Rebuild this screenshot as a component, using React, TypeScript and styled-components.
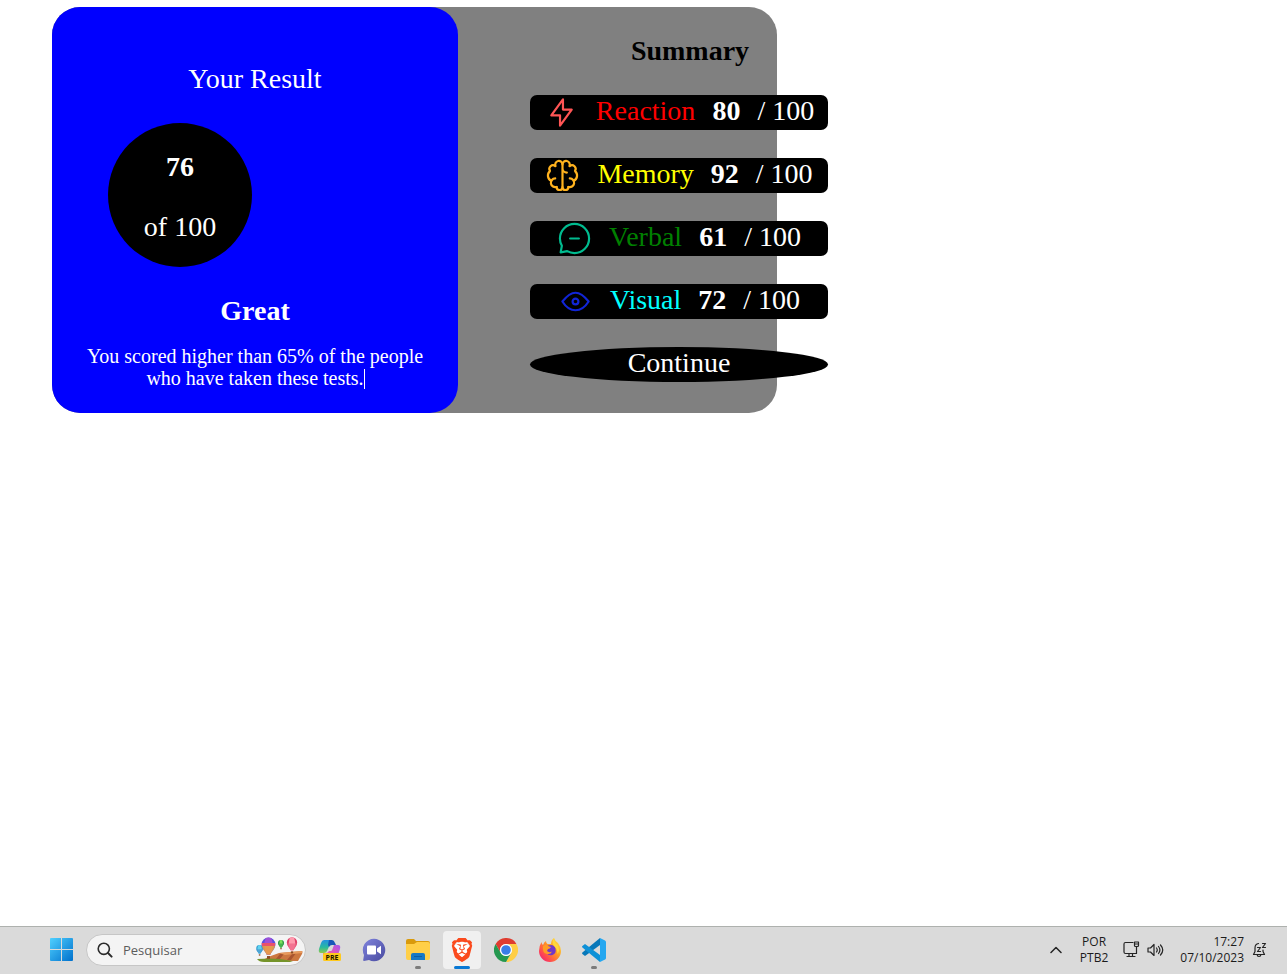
import React from "react";
import styled, { createGlobalStyle } from "styled-components";
import { SiBrave } from "react-icons/si";

const GlobalStyle = createGlobalStyle`
  * { box-sizing: border-box; }
  body { margin: 0; background: #fff; font-family: "Liberation Serif", "Times New Roman", serif; }
  h1, h2, p, ul { margin: 0; padding: 0; }
  button { font: inherit; color: inherit; border: 0; padding: 0; background: none; cursor: pointer; }
`;

const Screen = styled.div`
  display: flex;
  flex-direction: column;
  min-height: 100vh;
`;

const Page = styled.main`
  flex: 1;
  padding: 7px 52px;
  font-size: 28px;
  line-height: 32px;
`;

const Card = styled.div`
  display: flex;
  max-width: 725px;
  background: gray;
  border-radius: 28px;
`;

const Result = styled.section`
  display: flex;
  flex-direction: column;
  flex: 0 0 406px;
  padding: 56px 28px 23px;
  background: blue;
  border-radius: 28px;
  color: #fff;
  text-align: center;
`;

const ResultTitle = styled.h1`
  font-size: 28px;
  font-weight: 400;
`;

const Score = styled.div`
  display: flex;
  flex-direction: column;
  gap: 28px;
  width: 144px;
  height: 144px;
  margin: 28px;
  padding-top: 28px;
  background: #000;
  border-radius: 50%;
`;

const Grade = styled.h2`
  font-size: 28px;
`;

const Description = styled.p`
  margin-top: 18px;
  font-size: 20px;
  line-height: 22px;
`;

const Caret = styled.span`
  display: inline-block;
  width: 1px;
  height: 20px;
  margin-right: -1px;
  background: #fff;
  vertical-align: -4px;
`;

const Summary = styled.section`
  flex: 1;
  min-width: 0;
  padding: 28px 0 31px 72px;
`;

const SummaryContent = styled.div`
  display: flex;
  flex-direction: column;
  gap: 28px;
  width: 298px;
`;

const SummaryTitle = styled.h2`
  padding-left: 22px;
  font-size: 28px;
  text-align: center;
`;

const Scores = styled.ul`
  display: flex;
  flex-direction: column;
  gap: 28px;
  list-style: none;
`;

const ScoreRow = styled.li<{ $color: string }>`
  display: flex;
  justify-content: center;
  gap: 17px;
  height: 35px;
  background: #000;
  border-radius: 7px;
  color: #fff;
  white-space: nowrap;

  svg { width: 35px; height: 35px; }
  span:first-of-type { color: ${(p) => p.$color}; }
`;

const Continue = styled.button`
  height: 35px;
  padding-bottom: 3px;
  background: #000;
  border-radius: 50%;
  color: #fff;
`;

const Taskbar = styled.footer`
  display: flex;
  align-items: center;
  height: 48px;
  padding: 0 20px 2px 50px;
  background: #dadada;
  border-top: 1px solid #aeb1ae;
  color: #1b1b1b;
  font-family: "Open Sans", "Noto Sans", sans-serif;
  font-size: 12px;
  line-height: 16px;
`;

const StartButton = styled.button`
  width: 23px;
  height: 23px;
  margin-right: 13px;
  svg { display: block; }
`;

const Search = styled.label`
  display: flex;
  align-items: center;
  width: 220px;
  height: 32px;
  padding: 0 2px 0 10px;
  background: #f4f4f4;
  border: 1px solid #c6c6c6;
  border-radius: 16px;
`;

const SearchInput = styled.input`
  flex: 1;
  min-width: 0;
  margin-left: 10px;
  padding: 0;
  border: 0;
  background: none;
  outline: none;
  font: 13px/18px "Open Sans", "Noto Sans", sans-serif;
  color: #5c5c5c;
  &::placeholder { color: #5c5c5c; opacity: 1; }
`;

const Apps = styled.nav`
  display: flex;
  gap: 6px;
  margin-left: 5px;
`;

const AppButton = styled.button<{ $state?: "open" | "active" }>`
  position: relative;
  display: flex;
  align-items: center;
  justify-content: center;
  width: 38px;
  height: 38px;
  border-radius: 4px;
  background: ${(p) => (p.$state === "active" ? "#f0f0f0" : "none")};

  &::after {
    content: "";
    display: ${(p) => (p.$state ? "block" : "none")};
    position: absolute;
    bottom: 0;
    left: 50%;
    width: ${(p) => (p.$state === "active" ? 16 : 6)}px;
    height: 3px;
    border-radius: 2px;
    transform: translateX(-50%);
    background: ${(p) => (p.$state === "active" ? "#0878d4" : "#7c7c7c")};
  }
`;

const BraveMark = styled.span`
  display: flex;
  color: #fb4a1d;
  background: radial-gradient(circle at center, #fff 0 8px, transparent 8px);
`;

const Tray = styled.div`
  display: flex;
  align-items: center;
  margin-left: auto;
`;

const TrayButton = styled.button<{ $gap: number }>`
  margin-left: ${(p) => p.$gap}px;
  svg { display: block; }
`;

const TrayText = styled.div<{ $gap: number; $align: "center" | "right" }>`
  margin-left: ${(p) => p.$gap}px;
  text-align: ${(p) => p.$align};
`;

const LineIcon = ({ color, paths }: { color: string; paths: string[] }) => (
  <svg viewBox="0 0 20 20" fill="none" stroke={color} strokeWidth="1.25" strokeLinecap="round" strokeLinejoin="round" aria-hidden="true">
    {paths.map((d) => <path key={d} d={d} />)}
  </svg>
);

const categories = [
  {
    name: "Reaction", score: 80, color: "red", stroke: "#ff5555",
    paths: ["M10.833 8.333V2.5l-6.666 9.167h5V17.5l6.666-9.167h-5Z"],
  },
  {
    name: "Memory", score: 92, color: "yellow", stroke: "#ffb21e",
    paths: [
      "M5.833 11.667a2.5 2.5 0 1 0 .834 4.858",
      "M3.553 13.004a3.333 3.333 0 0 1-.728-5.53m.025-.067a2.083 2.083 0 0 1 2.983-2.824m.199.054A2.083 2.083 0 1 1 10 3.75v12.917a1.667 1.667 0 0 1-3.333 0M10 5.833a2.5 2.5 0 0 0 2.5 2.5m1.667 3.334a2.5 2.5 0 1 1-.834 4.858",
      "M16.447 13.004a3.334 3.334 0 0 0 .728-5.53m-.025-.067a2.083 2.083 0 0 0-2.983-2.824M10 3.75a2.085 2.085 0 0 1 2.538-2.033 2.084 2.084 0 0 1 1.43 2.92m-.635 12.03a1.667 1.667 0 0 1-3.333 0",
    ],
  },
  {
    name: "Verbal", score: 61, color: "green", stroke: "#00bb8f",
    paths: ["M7.5 10h5M10 18.333A8.333 8.333 0 1 0 1.667 10c0 1.518.406 2.942 1.115 4.167l-.699 3.75 3.75-.699A8.295 8.295 0 0 0 10 18.333Z"],
  },
  {
    name: "Visual", score: 72, color: "cyan", stroke: "#1125d6",
    paths: [
      "M10 11.667a1.667 1.667 0 1 0 0-3.334 1.667 1.667 0 0 0 0 3.334Z",
      "M17.5 10c-1.574 2.492-4.402 5-7.5 5s-5.926-2.508-7.5-5C4.416 7.632 6.66 5 10 5s5.584 2.632 7.5 5Z",
    ],
  },
];

const WindowsLogo = () => (
  <svg width="23" height="23" viewBox="0 0 23 23" aria-hidden="true">
    <defs>
      <linearGradient id="win" x1="0" y1="0" x2="23" y2="23" gradientUnits="userSpaceOnUse">
        <stop offset="0" stopColor="#4fd0ff" />
        <stop offset="1" stopColor="#0070cc" />
      </linearGradient>
    </defs>
    <path fill="url(#win)" d="M1 0h10v11H0V1q0-1 1-1ZM12 0h10q1 0 1 1v10H12ZM0 12h11v11H1q-1 0-1-1ZM12 12h11v10q0 1-1 1H12Z" />
  </svg>
);

const SearchGlyph = () => (
  <svg width="16" height="16" viewBox="0 0 16 16" fill="none" stroke="#2b2b2b" strokeLinecap="round" aria-hidden="true">
    <circle cx="6.8" cy="6.8" r="5.6" strokeWidth="1.6" />
    <path d="m11 11 3.6 3.6" strokeWidth="2" />
  </svg>
);

const Balloon = ({ x, y, r, colors }: { x: number; y: number; r: number; colors: [string, string, string] }) => (
  <g transform={`translate(${x} ${y}) scale(${r})`}>
    <path fill={colors[0]} d="M-1 0a1 1 0 0 1 2 0c0 .6-.5 1-.75 1.5h-.5C-.5 1-1 .6-1 0Z" />
    <path fill={colors[1]} d="M-.4-.9Q-.9.3-.25 1.5h.5Q.9.3.4-.9 0-1.1-.4-.9Z" />
    <path fill={colors[2]} d="M-.95.2h1.9C.9.7.5 1 .25 1.5h-.5C-.5 1-.9.7-.95.2Z" opacity=".75" />
    <path fill="#8c4c25" d="M-.22 1.7h.44v.4h-.44z" />
  </g>
);

const Balloons = () => (
  <svg width="47" height="26" viewBox="0 0 47 26" aria-hidden="true">
    <path fill="#cc7740" d="m12 20 11-4 23-2q1 0 0 3l-4 7H6Z" />
    <path fill="#a95530" d="m25 16 3 1-5 6h-4l5-6ZM37 15l3 1-5 7h-4l5-6Z" />
    <path fill="#e79a5d" d="m23 16 23-2v2l-17 2Z" />
    <path fill="#75942a" d="M1 22q13-1 23 0l13 2-3 1H8q-5 0-7-3Z" />
    <Balloon x={3.6} y={11.5} r={3.4} colors={["#359fd0", "#61d2ef", "#4696cc"]} />
    <Balloon x={12.5} y={7.3} r={6.9} colors={["#574fe0", "#9f50d6", "#ffb222"]} />
    <path fill="#e8526b" d="M5.700 6h13.600l-.3 3H6Z" />
    <Balloon x={25} y={6} r={3} colors={["#258f3c", "#7ae15c", "#35a34c"]} />
    <Balloon x={36} y={5.500} r={5.200} colors={["#df426b", "#ff9bae", "#ed6687"]} />
  </svg>
);

const CopilotIcon = () => (
  <svg width="24" height="24" viewBox="0 0 24 24" aria-hidden="true">
    <defs>
      <linearGradient id="copA" x1="0" y1="0" x2="0" y2="1">
        <stop offset="0" stopColor="#2490e2" /><stop offset=".55" stopColor="#28b9a0" /><stop offset="1" stopColor="#8fca4c" />
      </linearGradient>
      <linearGradient id="copB" x1="1" y1="0" x2="0" y2="1">
        <stop offset="0" stopColor="#a954ed" /><stop offset=".55" stopColor="#e458b5" /><stop offset="1" stopColor="#ff7d58" />
      </linearGradient>
    </defs>
    <path fill="url(#copA)" d="M6 2h8L9 13q-1 2-3 2H3q-3 0-2-4l2-6q1-3 3-3Z" />
    <path fill="#1a56b8" d="M11 2h3q2 0 3 3l1 2h-4q-2 0-3 2l-1-2Z" />
    <path fill="url(#copB)" d="M16 7h4q3 0 2 4l-2 6q-1 3-4 3H8q-3 0-3-5h3q2 0 3-2h2q1 0 1.500-2Z" />
    <rect x="5" y="15" width="18" height="8" rx="1.5" fill="#ffc91c" />
    <text x="14" y="21.6" fontSize="7" fontWeight="700" fontFamily="Open Sans, sans-serif" textAnchor="middle" fill="#1c1500">PRE</text>
  </svg>
);

const ChatIcon = () => (
  <svg width="24" height="24" viewBox="0 0 24 24" aria-hidden="true">
    <defs>
      <linearGradient id="chat" x1="0" y1="0" x2="1" y2="1">
        <stop offset="0" stopColor="#8084dd" /><stop offset="1" stopColor="#484a9f" />
      </linearGradient>
    </defs>
    <path fill="url(#chat)" d="M12 .8A11.2 11.2 0 1 1 7 22l-5 1q-1 0-.8-1l.8-5A11.2 11.2 0 0 1 12 .8Z" />
    <rect x="5" y="7.5" width="9" height="9" rx="1" fill="#fff" />
    <path d="m15 10.5 4-2.8v8.6l-4-2.8Z" fill="#fff" />
  </svg>
);

const FolderIcon = () => (
  <svg width="24" height="24" viewBox="0 0 24 24" aria-hidden="true">
    <path fill="#d99a0c" d="M0 3q0-2 2-2h6l2 2h12q2 0 2 2v3H0Z" />
    <path fill="#ffcf48" d="M0 6h8l3-2h11q2 0 2 2v14q0 2-2 2H2q-2 0-2-2Z" />
    <path fill="#1779c5" d="M5 22v-5q0-2 2-2h10q2 0 2 2v5Z" />
    <path fill="#0b5da5" d="M8 18h8v1H8z" />
  </svg>
);

const ChromeIcon = () => (
  <svg width="24" height="24" viewBox="0 0 24 24" aria-hidden="true">
    <path fill="#df3c30" d="M1.6 6A12 12 0 0 1 22.4 6H12a6 6 0 0 0-5.2 9Z" />
    <path fill="#ffce45" d="M22.4 6A12 12 0 0 1 12 24l5.2-9A6 6 0 0 0 12 6Z" />
    <path fill="#25984f" d="M1.6 6A12 12 0 0 0 12 24l5.2-9a6 6 0 0 1-10.4 0Z" />
    <circle cx="12" cy="12" r="6" fill="#fff" />
    <circle cx="12" cy="12" r="4.8" fill="#397de7" />
  </svg>
);

const FirefoxIcon = () => (
  <svg width="24" height="24" viewBox="0 0 24 24" aria-hidden="true">
    <defs>
      <linearGradient id="fox" x1="1" y1="0" x2="0" y2="1">
        <stop offset="0" stopColor="#fff44f" /><stop offset=".4" stopColor="#ffa022" /><stop offset=".75" stopColor="#ff4452" /><stop offset="1" stopColor="#e31587" />
      </linearGradient>
    </defs>
    <path fill="url(#fox)" d="M3.500 4q0 2 1.500 3 1-3 3-4 0 2 1.500 3H13q0-4 3-6 1 3 4 5 3 4 3 8a11 11 0 0 1-22 0q0-5 2.500-9Z" />
    <path fill="#7139c9" d="M10 7.500q6-2 7.500 3 1 5-3 6.500-4 1-6-2-1-4 1.500-7.500Z" />
    <path fill="#ff9c25" d="M5 8q3-2 5 0l3 1q-1 2-3 2l-1 2q2 2 5 .5-1 3-5 2.500-5-1-4-8Z" />
    <path fill="#ffd83c" d="M16 0q0 4 3.500 7 3 5 0 9 0-5-2.500-7-4-3-1-9Z" />
  </svg>
);

const CodeIcon = () => (
  <svg width="24" height="24" viewBox="0 0 24 24" aria-hidden="true">
    <path fill="#0878b9" d="M18 0v7L3 18 .4 16q-.7-.6 0-1.4Z" />
    <path fill="#0e91d7" d="M.4 8.1 3 6l15 11v7L.4 9.4q-.7-.7 0-1.3Z" />
    <path fill="#25a7f0" d="m18 0 5 2.4q1 .5 1 1.6v16q0 1.1-1 1.6L18 24Z" />
  </svg>
);

const trayStroke = { fill: "none", stroke: "#242424", strokeWidth: 1.2, strokeLinecap: "round", strokeLinejoin: "round" } as const;

export default function App() {
  return (
    <Screen>
      <GlobalStyle />
      <Page>
        <Card>
          <Result>
            <ResultTitle>Your Result</ResultTitle>
            <Score>
              <strong>76</strong>
              <span>of 100</span>
            </Score>
            <Grade>Great</Grade>
            <Description>
              You scored higher than 65% of the people who have taken these tests.<Caret />
            </Description>
          </Result>
          <Summary>
            <SummaryContent>
              <SummaryTitle>Summary</SummaryTitle>
              <Scores>
                {categories.map((c) => (
                  <ScoreRow key={c.name} $color={c.color}>
                    <LineIcon color={c.stroke} paths={c.paths} />
                    <span>{c.name}</span>
                    <strong>{c.score}</strong>
                    <span>/ 100</span>
                  </ScoreRow>
                ))}
              </Scores>
              <Continue type="button">Continue</Continue>
            </SummaryContent>
          </Summary>
        </Card>
      </Page>

      <Taskbar>
        <StartButton type="button" aria-label="Iniciar"><WindowsLogo /></StartButton>
        <Search>
          <SearchGlyph />
          <SearchInput type="text" placeholder="Pesquisar" aria-label="Pesquisar" />
          <Balloons />
        </Search>
        <Apps>
          <AppButton type="button" aria-label="Copilot"><CopilotIcon /></AppButton>
          <AppButton type="button" aria-label="Chat"><ChatIcon /></AppButton>
          <AppButton type="button" aria-label="Explorador de Arquivos" $state="open"><FolderIcon /></AppButton>
          <AppButton type="button" aria-label="Brave" $state="active"><BraveMark><SiBrave size={24} /></BraveMark></AppButton>
          <AppButton type="button" aria-label="Chrome"><ChromeIcon /></AppButton>
          <AppButton type="button" aria-label="Firefox"><FirefoxIcon /></AppButton>
          <AppButton type="button" aria-label="Visual Studio Code" $state="open"><CodeIcon /></AppButton>
        </Apps>
        <Tray>
          <TrayButton type="button" aria-label="Mostrar ícones ocultos" $gap={0}>
            <svg width="12" height="8" viewBox="0 0 12 8" {...trayStroke} strokeWidth={1.5}><path d="m1 6.5 5-5 5 5" /></svg>
          </TrayButton>
          <TrayText $gap={18} $align="center">POR<br />PTB2</TrayText>
          <TrayButton type="button" aria-label="Rede" $gap={15}>
            <svg width="17" height="17" viewBox="0 0 17 17" {...trayStroke}>
              <path d="M10 1.5H2.5q-1.5 0-1.5 1.500v8q0 1.500 1.500 1.500h11V6M4 15.500h8M6 12.500v3M9.500 12.500v3M11.500 1h4v3.500q0 1-1 1h-2q-1 0-1-1ZM11.500 3h4" />
            </svg>
          </TrayButton>
          <TrayButton type="button" aria-label="Volume" $gap={7}>
            <svg width="17" height="14" viewBox="0 0 17 14" {...trayStroke}>
              <path d="M1 5h2.500L7 1.500v11L3.500 9H1ZM9.500 5q1.500 2 0 4M11.500 3.500q2.800 3.500 0 7M13.500 2q4.500 5 0 10" />
            </svg>
          </TrayButton>
          <TrayText $gap={16} $align="right">17:27<br />07/10/2023</TrayText>
          <TrayButton type="button" aria-label="Notificações" $gap={8}>
            <svg width="15" height="16" viewBox="0 0 15 16" {...trayStroke}>
              <path d="M6.500 1.500Q3 2 3 6v3.500L1.500 12.500h11L11 9.500V8M5 12.500q.3 2 2 2t2-2M5.500 5.500h3l-3 4h3M10.500 1.500h3l-3 4h3" />
            </svg>
          </TrayButton>
        </Tray>
      </Taskbar>
    </Screen>
  );
}
